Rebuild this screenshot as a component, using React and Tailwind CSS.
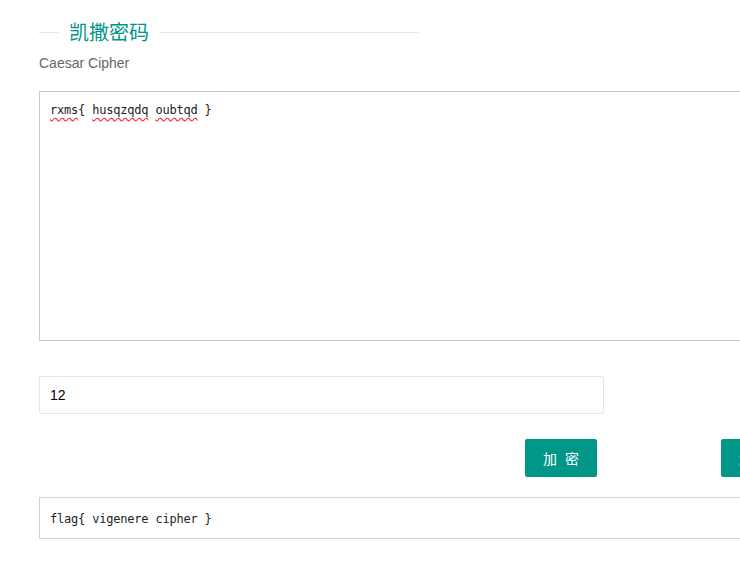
import React from "react";

const sans = { fontFamily: '"Liberation Sans", Arial, "Noto Sans CJK SC", sans-serif' };

const App = () => {
  return (
    <div
      className="w-[740px] h-[568px] overflow-hidden bg-white text-[14px] text-[#333]"
      style={sans}
    >
      <div className="w-[900px] pl-[39px]">
        <fieldset className="w-[380px] border-t border-[#e6e6e6] mt-[20px] px-0">
          <legend className="ml-[20px] px-[10px] text-[20px] leading-[24px] text-[#009688] font-['Noto_Sans_CJK_SC',sans-serif]">
            凯撒密码
          </legend>
        </fieldset>
        <p className="mt-[9px] text-[14px] leading-[20px] text-[#666]">Caesar Cipher</p>

        <div className="mt-[18px] w-[760px] h-[250px] border border-[#c9c9c9] px-[10px] py-[8px] font-['DejaVu_Sans_Mono',monospace] text-[12px] tracking-[-0.2px] leading-[20px] text-[#222]">
          <span className="underline decoration-wavy decoration-red-500 underline-offset-[3px]">rxms</span>
          {"{ "}
          <span className="underline decoration-wavy decoration-red-500 underline-offset-[3px]">husqzqdq</span>{" "}
          <span className="underline decoration-wavy decoration-red-500 underline-offset-[3px]">oubtqd</span>
          {" }"}
        </div>

        <div className="mt-[35px] w-[565px] h-[38px] border border-[#e6e6e6] rounded-[2px] flex items-center px-[10px] text-[14px] text-black">
          12
        </div>

        <div className="mt-[25px] flex">
          <button className="ml-[486px] w-[72px] h-[38px] bg-[#009688] text-white rounded-[2px] text-[14px] tracking-[8px] pl-[8px] font-['Noto_Sans_CJK_SC',sans-serif]">
            加密
          </button>
          <button className="ml-[124px] w-[72px] h-[38px] bg-[#009688] text-white rounded-[2px] text-[14px] tracking-[8px] pl-[8px] font-['Noto_Sans_CJK_SC',sans-serif]">
            解密
          </button>
        </div>

        <div className="mt-[20px] w-[760px] h-[42px] border border-[#d2d2d2] flex items-center px-[10px] pt-[2px] font-['DejaVu_Sans_Mono',monospace] text-[12px] tracking-[-0.2px] text-[#222]">
          flag{"{"} vigenere cipher {"}"}
        </div>
      </div>
    </div>
  );
};

export default App;
